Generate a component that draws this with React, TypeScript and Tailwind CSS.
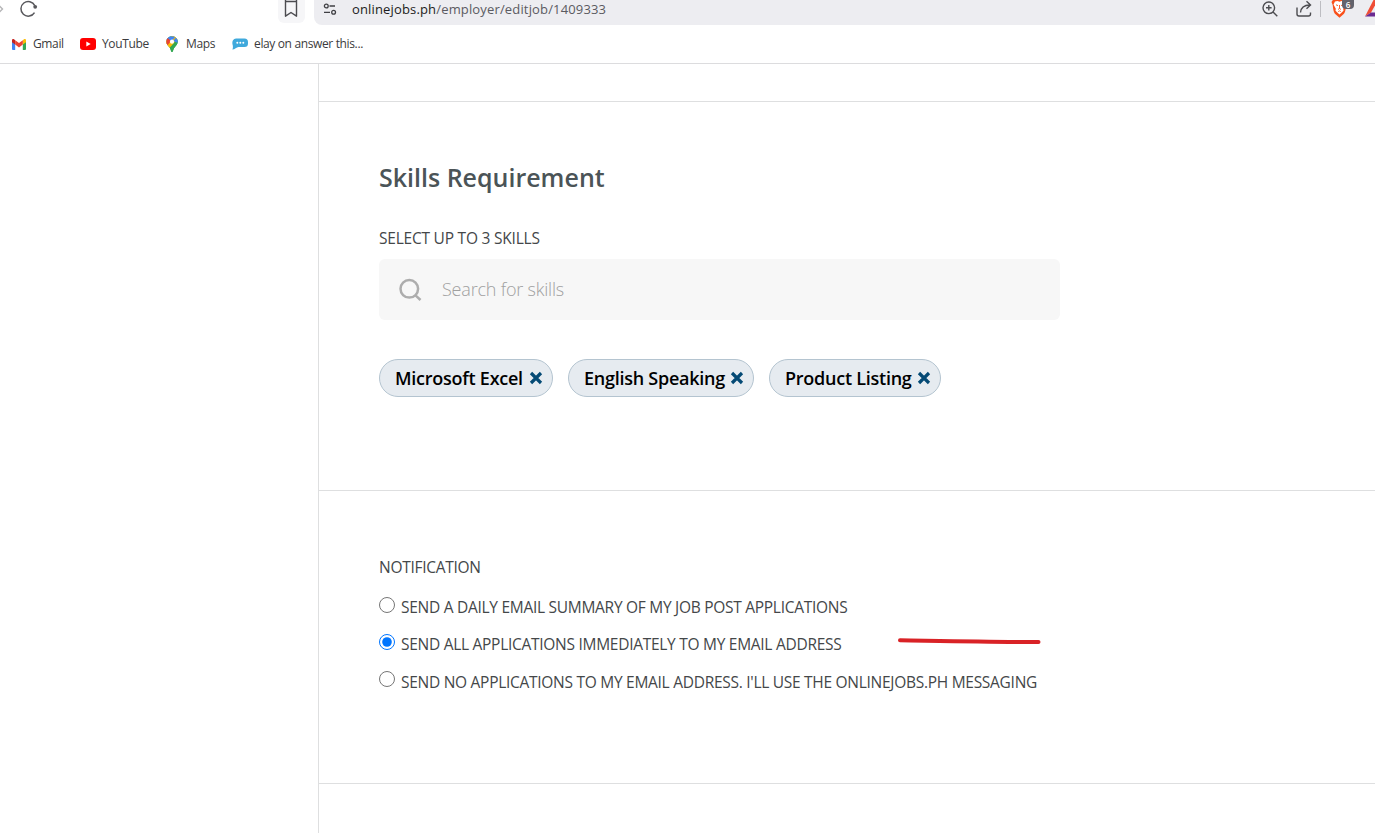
import type { ReactNode } from "react";

type BookmarkProps = {
  icon: ReactNode;
  label: string;
  className: string;
};

const skills = [
  { name: "Microsoft Excel", className: "w-[174px]" },
  { name: "English Speaking", className: "w-[186px]" },
  { name: "Product Listing", className: "w-[172px]" },
];

const notifications = [
  { id: "daily", label: "SEND A DAILY EMAIL SUMMARY OF MY JOB POST APPLICATIONS" },
  { id: "all", label: "SEND ALL APPLICATIONS IMMEDIATELY TO MY EMAIL ADDRESS" },
  {
    id: "none",
    label: "SEND NO APPLICATIONS TO MY EMAIL ADDRESS. I'LL USE THE ONLINEJOBS.PH MESSAGING",
  },
];

function GmailIcon() {
  return (
    <svg width="14" height="11" viewBox="0 0 14 11">
      <path d="M0 2h3.2v9H1a1 1 0 0 1-1-1z" fill="#4285f4" />
      <path d="M10.8 2H14v8a1 1 0 0 1-1 1h-2.2z" fill="#34a853" />
      <path d="M10.8 1.2 12 .3c.9-.6 2 0 2 1v1.9l-3.2 2.4z" fill="#fbbc04" />
      <path d="M0 3.2V1.3C0 .3 1.1-.3 2 .3l1.2.9v4.4z" fill="#c5221f" />
      <path d="M3.2 1.2 7 4.1l3.8-2.900v4.400L7 8.500 3.200 5.600z" fill="#ea4335" />
    </svg>
  );
}

function YouTubeIcon() {
  return (
    <svg width="16" height="12" viewBox="0 0 16 12">
      <rect width="16" height="12" rx="3" fill="#f00" />
      <path d="M6.300 3.500 10.700 6l-4.400 2.500z" fill="#fff" />
    </svg>
  );
}

function MapsIcon() {
  return (
    <svg width="12" height="16" viewBox="0 0 12 16">
      <defs>
        <clipPath id="pin">
          <path d="M6 0a5.700 5.700 0 0 1 5.700 5.700c0 3-2.300 4.200-3.700 6.500C7.100 13.700 7 16 6 16s-1.100-2.300-2-3.800C2.600 9.900.3 8.700.3 5.700A5.700 5.700 0 0 1 6 0z" />
        </clipPath>
      </defs>
      <g clipPath="url(#pin)">
        <path d="M0 0h12v16H0z" fill="#34a853" />
        <path d="M0 9.500V4l6-4h6v3L2.500 13z" fill="#fbbc04" />
        <path d="M12 2v14H3l1-4z" fill="#34a853" />
        <path d="M5 6 9.500.5 0 0v4z" fill="#4285f4" />
        <path d="M0 3 1.700 2.100 5 5 1.500 9.300 0 8z" fill="#ea4335" />
        <path d="m7 5 3.500-4L12 4v3z" fill="#4285f4" />
      </g>
      <circle cx="6" cy="5.700" r="2.100" fill="#fff" />
    </svg>
  );
}

function ChatIcon() {
  return (
    <svg width="16" height="12" viewBox="0 0 16 12">
      <path
        d="M4 .5h8.500A3.500 3.500 0 0 1 16 4v1.500A3.500 3.500 0 0 1 12.500 9H6.500C4.500 9.500 3 11.300.3 11.600 1 10.500 1 9 .8 7.500.2 5.500.2 3.500 1 2.200A3.500 3.500 0 0 1 4 .5z"
        fill="#3fa9dc"
      />
      <circle cx="5.300" cy="4.700" r="1" fill="#fff" />
      <circle cx="8.300" cy="4.700" r="1" fill="#fff" />
      <circle cx="11.300" cy="4.700" r="1" fill="#fff" />
    </svg>
  );
}

function Bookmark({ icon, label, className }: BookmarkProps) {
  return (
    <div className={`flex shrink-0 items-center ${className}`}>
      {icon}
      <span className="whitespace-nowrap text-[12px] leading-4 tracking-[-0.36px] text-[#3b3b3d]">{label}</span>
    </div>
  );
}

function BrowserBar() {
  return (
    <header className="h-16 border-b border-[#dcdcde] bg-white">
      <div className="flex h-[25px] items-start">
        <svg width="278" height="25" viewBox="0 0 278 25" fill="none">
          <path d="M-2 4.500 2.500 9-2 13.500" stroke="#b5b5b7" strokeWidth="1.400" />
          <path d="M34.500 12.600A7.300 7.300 0 1 1 34.800 5.600" stroke="#58585c" strokeWidth="1.500" />
          <circle cx="35.200" cy="6.800" r="1.900" fill="#58585c" />
        </svg>
        <div className="flex h-[23px] w-[27px] justify-center rounded-b-md bg-[#f6f6f8] pr-px">
          <svg width="14" height="18" viewBox="0 0 14 18" fill="none">
            <path
              d="M1.500-1v17.200L7 12.500l5.500 3.700V-1M1.500 1.500h11"
              stroke="#4c4c50"
              strokeWidth="1.400"
              strokeLinejoin="round"
            />
          </svg>
        </div>
        <div className="ml-[9px] flex h-[25px] flex-1 items-start rounded-bl-lg bg-[#ededf1]">
          <svg className="ml-[9px] mt-[2px]" width="14" height="14" viewBox="0 0 14 14" fill="none">
            <g stroke="#3f3f43" strokeWidth="1.300">
              <circle cx="3.300" cy="4" r="1.900" />
              <path d="M6.500 4h5.500M1 10.300h6" />
              <circle cx="10.600" cy="10.300" r="1.900" />
            </g>
          </svg>
          <p className="ml-[15px] whitespace-nowrap text-[13px] leading-[18px] tracking-[0.155px] text-[#5b5b61]">
            <span className="text-[#1c1c20]">onlinejobs.ph</span>/employer/editjob/1409333
          </p>
          <div className="relative ml-auto h-[25px] w-[115px]">
            <svg width="115" height="25" viewBox="1260 0 115 25" fill="none">
              <g stroke="#4c4c50" strokeWidth="1.400">
                <circle cx="1268.800" cy="7.800" r="5.800" />
                <path d="m1273 12 4.300 4.300M1266 7.800h5.600M1268.800 5v5.600" />
                <path d="M1297 7.500v6.500c0 1.400.8 2 2 2h9.500c1.400 0 2-.8 2-2V12.500" />
                <path d="M1300.500 12.500c.3-4.500 3-7.300 9.500-7.500M1306.500 1.300l4 3.700-4 3.700" />
              </g>
              <path d="M1320.500 1v16" stroke="#bdbdc2" />
              <path
                d="M1333.500-1h12l1.500 3-.8 3c-.4 4-.9 7-2.200 8.700l-4.500 4.100-4.600-4.100c-1.300-1.700-1.800-4.700-2.200-8.700l-1.200-3z"
                fill="#f9501b"
              />
              <path
                d="m1335 1.500 2.500-.5 2 .8 2-.8 2.500.5 1.500 3-2.300 4.300.3 2-4 3.700-4-3.700.3-2-2.300-4.300z"
                fill="#fff"
              />
              <path
                d="m1336 4.800 2 .8M1343 4.800l-2 .8M1339.500 5v3.500l-1.500 1M1339.500 8.500l1.500 1M1338.200 11.600l1.300-.7 1.300.7"
                stroke="#f9501b"
                strokeWidth=".9"
              />
              <path d="M1365 16.500 1374-1h1v6.500l-4 7z" fill="#ef4d36" />
              <path d="M1365 16.500 1371 12.600h4v3.900z" fill="#6b2b91" />
            </svg>
            <span className="absolute left-[82px] top-0 flex h-[9px] w-[12px] items-center justify-center rounded-b bg-[#62626b] text-[8px] font-semibold leading-[8px] text-white">
              6
            </span>
          </div>
        </div>
      </div>
      <nav className="flex h-[38px] items-center">
        <Bookmark icon={<GmailIcon />} label="Gmail" className="ml-3 w-[68px] gap-[7px]" />
        <Bookmark icon={<YouTubeIcon />} label="YouTube" className="w-[86px] gap-[6px]" />
        <Bookmark icon={<MapsIcon />} label="Maps" className="w-[66px] gap-2" />
        <Bookmark icon={<ChatIcon />} label="elay on answer this..." className="gap-[6px]" />
      </nav>
    </header>
  );
}

function SkillTag({ name, className }: { name: string; className: string }) {
  return (
    <div
      className={`flex h-[38px] items-center justify-between rounded-full border border-[#b4c4d0] bg-[#e6ebf0] pl-[15px] pr-[9px] ${className}`}
    >
      <span className="whitespace-nowrap text-[18px] font-semibold tracking-[-0.25px] text-black">{name}</span>
      <svg width="14" height="14" viewBox="0 0 14 14">
        <path d="m2 2 10 10M12 2 2 12" stroke="#044a75" strokeWidth="3.200" />
      </svg>
    </div>
  );
}

function SkillsSection() {
  return (
    <section className="h-[389px] border-b border-[#dedfe0] pl-[60px] pt-[57px]">
      <h2 className="text-[25px] font-semibold leading-9 text-[#4b5457]">Skills Requirement</h2>
      <p className="mt-[31px] text-[15.5px] leading-6 tracking-[-0.22px] text-[#444749]">SELECT UP TO 3 SKILLS</p>
      <div className="mt-[9px] flex h-[61px] w-[681px] items-center rounded-md bg-[#f7f7f7] pl-5">
        <svg width="24" height="24" viewBox="0 0 24 24" fill="none" stroke="#adadad" strokeWidth="2.500">
          <circle cx="10.300" cy="10.800" r="8.800" />
          <path d="m16.500 17.300 5 4.700" />
        </svg>
        <span className="ml-[19px] text-[18px] font-light tracking-[-0.2px] text-[#a0a0a0]">Search for skills</span>
      </div>
      <div className="mt-[39px] flex gap-[15px]">
        {skills.map((skill) => (
          <SkillTag key={skill.name} name={skill.name} className={skill.className} />
        ))}
      </div>
    </section>
  );
}

function NotificationSection() {
  return (
    <section className="relative h-[293px] border-b border-[#dedfe0] pl-[60px] pt-[64px]">
      <p className="text-[15.5px] leading-6 tracking-[-0.28px] text-[#444749]">NOTIFICATION</p>
      <div className="mt-4 flex flex-col gap-[13.4px]">
        {notifications.map((item) => (
          <label key={item.id} className="flex h-6 items-start text-[15.5px] leading-6 tracking-[-0.28px] text-[#444749]">
            <input
              type="radio"
              name="notification"
              defaultChecked={item.id === "all"}
              className="m-0 mt-[1.500px] h-4 w-4 shrink-0 accent-[#0075ff]"
            />
            <span className="ml-[6px] whitespace-nowrap">{item.label}</span>
          </label>
        ))}
      </div>
      <svg
        className="absolute left-[578px] top-[145px]"
        width="146"
        height="12"
        viewBox="0 0 146 12"
        fill="none"
      >
        <path d="M3 4.300C48 5 100 6 141.500 6" stroke="#d92226" strokeWidth="4" strokeLinecap="round" />
      </svg>
    </section>
  );
}

export default function App() {
  return (
    <div className="h-[833px] w-[1375px] overflow-hidden bg-white font-['Open_Sans','Noto_Sans',sans-serif]">
      <BrowserBar />
      <main className="ml-[318px] h-[769px] border-l border-[#dedfe0]">
        <div className="h-[38px] border-b border-[#dedfe0]" />
        <SkillsSection />
        <NotificationSection />
      </main>
    </div>
  );
}
